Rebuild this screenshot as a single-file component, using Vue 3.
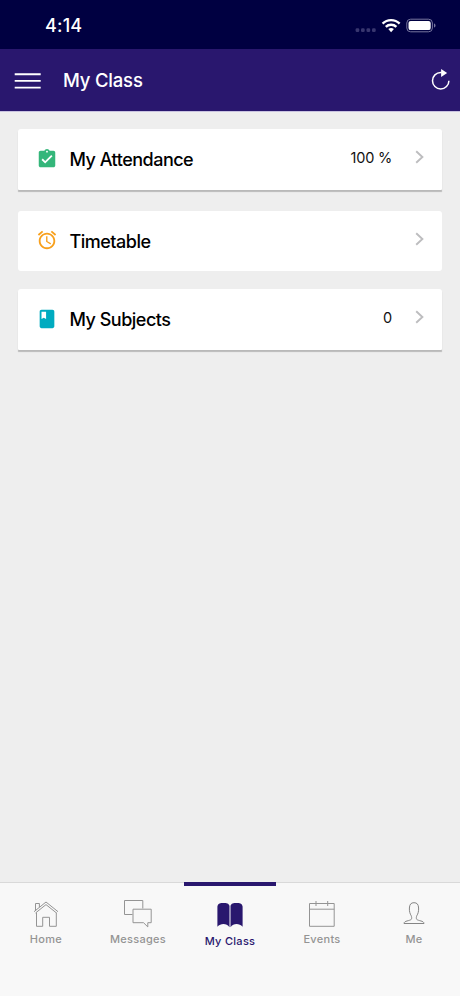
<script setup>
import { ref } from 'vue'

const cards = [
  { id: 'attendance', label: 'My Attendance', value: '100 %', raised: true },
  { id: 'timetable', label: 'Timetable', value: '', raised: false },
  { id: 'subjects', label: 'My Subjects', value: '0', raised: true },
]

const tabs = [
  { id: 'home', label: 'Home' },
  { id: 'messages', label: 'Messages' },
  { id: 'class', label: 'My Class' },
  { id: 'events', label: 'Events' },
  { id: 'me', label: 'Me' },
]

const activeTab = ref('class')
</script>

<template>
  <div class="app">
    <div class="status-bar">
      <span class="time">4:14</span>
      <svg class="status-icons" width="82" height="18" viewBox="0 0 82 18">
        <g fill="#38366f">
          <rect x="0.600" y="11.300" width="3.700" height="3.700" rx="1.300" />
          <rect x="6" y="11.300" width="3.700" height="3.700" rx="1.300" />
          <rect x="11.500" y="11.300" width="3.700" height="3.700" rx="1.300" />
          <rect x="17" y="11.300" width="3.700" height="3.700" rx="1.300" />
        </g>
        <g fill="none" stroke="#fff" stroke-width="2.400">
          <path d="M27.600 6.700a12 12 0 0 1 17 0" />
          <path d="M30.800 9.900a7.600 7.600 0 0 1 10.600 0" />
        </g>
        <path d="M33.300 12.100a4.400 4.400 0 0 1 5.600 0L36.100 15.200z" fill="#fff" />
        <rect x="51.800" y="2.200" width="25.600" height="12.600" rx="3.800" fill="none" stroke="#77769f" />
        <rect x="53.500" y="3.900" width="22.200" height="9.200" rx="2.200" fill="#fff" />
        <path d="M79 6.400v4.200c1-.4 1.500-1.100 1.500-2.100s-.5-1.700-1.500-2.100z" fill="#77769f" />
      </svg>
    </div>

    <header class="header">
      <button class="menu-btn" type="button" aria-label="Menu">
        <svg width="27" height="16" viewBox="0 0 27 16">
          <path d="M.7 1.200h26M.7 7.900h26M.7 14.600h26" stroke="#fff" stroke-width="1.900" />
        </svg>
      </button>
      <h1 class="title">My Class</h1>
      <button class="refresh-btn" type="button" aria-label="Refresh">
        <svg width="20" height="22" viewBox="0 0 20 22">
          <path d="M17.900 11.700a8.200 8.200 0 1 1-8.200-8.200h1" fill="none" stroke="#fff" stroke-width="1.500" />
          <path d="M10.100 0v8l6-4z" fill="#fff" />
        </svg>
      </button>
    </header>

    <main class="content">
      <div
        v-for="card in cards"
        :key="card.id"
        class="card"
        :class="{ raised: card.raised }"
      >
        <svg class="card-icon" width="22" height="22" viewBox="0 0 24 24">
          <path
            v-if="card.id === 'attendance'"
            fill="#34b67a"
            d="M19 3h-4.180C14.400 1.840 13.300 1 12 1s-2.400.840-2.820 2H5c-1.100 0-2 .9-2 2v14c0 1.100.9 2 2 2h14c1.100 0 2-.9 2-2V5c0-1.100-.9-2-2-2zm-7 0c.550 0 1 .450 1 1s-.450 1-1 1-1-.450-1-1 .450-1 1-1zm-2 14l-4-4 1.410-1.410L10 14.170l6.590-6.590L18 9l-8 8z"
          />
          <path
            v-else-if="card.id === 'timetable'"
            fill="#f8a01c"
            d="M22 5.720l-4.600-3.860-1.290 1.530 4.600 3.860L22 5.720zM7.880 3.390L6.600 1.860 2 5.710l1.290 1.530 4.590-3.850zM12.500 8H11v6l4.750 2.850.750-1.230-4-2.370V8zM12 4c-4.970 0-9 4.030-9 9s4.020 9 9 9 9-4.030 9-9-4.030-9-9-9zm0 16c-3.870 0-7-3.130-7-7s3.130-7 7-7 7 3.130 7 7-3.130 7-7 7z"
          />
          <path
            v-else
            fill="#00abc0"
            d="M18 2H6c-1.100 0-2 .9-2 2v16c0 1.100.9 2 2 2h12c1.100 0 2-.9 2-2V4c0-1.100-.9-2-2-2zM6 4h5v8l-2.500-1.500L6 12V4z"
          />
        </svg>
        <span class="card-label">{{ card.label }}</span>
        <span class="card-value">{{ card.value }}</span>
        <svg class="chevron" width="9" height="14" viewBox="0 0 9 14">
          <path d="M1.200 1.200L7.400 7l-6.200 5.800" fill="none" stroke="#bdbdbf" stroke-width="1.900" />
        </svg>
      </div>
    </main>

    <nav class="tab-bar">
      <button
        v-for="tab in tabs"
        :key="tab.id"
        class="tab"
        :class="{ active: tab.id === activeTab }"
        type="button"
        @click="activeTab = tab.id"
      >
        <svg class="tab-icon" width="30" height="30" viewBox="0 0 30 30">
          <g v-if="tab.id === 'home'" fill="none" stroke="#949494">
            <path d="M3 12.700L15 3l12 9.700M4.500 14L15 5.600 25.500 14M4.500 11.200V4.500h3.900v3.600" />
            <path d="M5.500 13.500v13.800h6.200v-9h6.800v9h6.800V13.500" />
          </g>
          <g v-else-if="tab.id === 'messages'" fill="none" stroke="#949494">
            <path d="M9.500 15.500h-8v-14h18.300v8" />
            <path d="M10 10.200h18.200v13.500h-3.400v4.200l-4.300-4.200H10z" />
          </g>
          <path
            v-else-if="tab.id === 'class'"
            fill="#29176e"
            d="M14.500 7C13.800 4.300 11.500 4 8.500 4S3 4.200 2.400 7.500v20.300c3.300-3.900 9.200-3.900 12.100.4zM15.500 7c.7-2.700 3-3 6-3s5.500.2 6.100 3.500v20.300c-3.300-3.900-9.200-3.900-12.100.4z"
          />
          <g v-else-if="tab.id === 'events'" fill="none" stroke="#949494">
            <path d="M2.500 4.500h24.700v22.800H2.500zM2.500 10.200h24.700M9 2v5M20.700 2v5" />
          </g>
          <path
            v-else
            fill="none"
            stroke="#858585"
            d="M5 24.500c0-2.900 5.800-2.500 7.300-4.200.7-1 .3-2.600-.1-3.600-1.200-1.800-2-4.500-1.800-7.700.2-3.700 1.600-5.300 4.600-5.300s4.400 1.600 4.600 5.300c.2 3.200-.6 5.900-1.800 7.700-.4 1-.8 2.600-.1 3.600 1.500 1.700 7.300 1.300 7.300 4.200z"
          />
        </svg>
        <span class="tab-label">{{ tab.label }}</span>
      </button>
    </nav>
  </div>
</template>

<style>
body {
  background: #eee;
}
</style>

<style scoped>
.app {
  display: flex;
  flex-direction: column;
  height: 100vh;
  background: #eee;
  font-family: Inter, 'Liberation Sans', sans-serif;
}

button {
  padding: 0;
  border: 0;
  background: none;
  font-family: inherit;
}

.status-bar {
  display: flex;
  align-items: center;
  justify-content: space-between;
  box-sizing: border-box;
  height: 49px;
  padding: 2px 23px 0 45px;
  background: #000041;
}

.time {
  color: #fff;
  font-size: 18px;
  font-weight: 500;
  letter-spacing: 0.2px;
}

.header {
  display: flex;
  align-items: center;
  box-sizing: border-box;
  height: 63px;
  padding: 0 9px 0 14px;
  border-bottom: 1px solid #c9c3e0;
  background: #29176e;
}

.menu-btn {
  display: flex;
  margin-top: 1px;
}

.title {
  flex: 1;
  margin: 0 0 0 22px;
  color: #fff;
  font-size: 18.5px;
  font-weight: 500;
  letter-spacing: -0.2px;
}

.refresh-btn {
  display: flex;
}

.content {
  flex: 1;
  padding: 17px 18px;
}

.card {
  display: flex;
  align-items: center;
  box-sizing: border-box;
  height: 60px;
  margin-bottom: 18px;
  padding: 0 18px;
  background: #fff;
  border-radius: 3px;
}

.card.raised {
  height: 61px;
  margin-bottom: 21px;
  border-radius: 3px 3px 1px 1px;
  box-shadow: 0 2px 1px -0.5px rgba(0, 0, 0, 0.22);
}

.card-icon {
  margin-bottom: 2px;
}

.card-label {
  flex: 1;
  margin-left: 11.500px;
  color: #000;
  font-size: 18px;
  font-weight: 500;
  letter-spacing: -0.5px;
}

.card-value {
  margin: 0 23px 4px 0;
  color: #111;
  font-size: 14.5px;
  letter-spacing: -0.2px;
}

.chevron {
  margin-bottom: 5px;
}

.tab-bar {
  display: flex;
  box-sizing: border-box;
  height: 114px;
  border-top: 1px solid #d9d9d9;
  background: #f8f8f8;
}

.tab {
  display: flex;
  flex: 1;
  flex-direction: column;
  align-items: center;
  padding-top: 16px;
  color: #949494;
}

.tab-label {
  margin-top: 3px;
  font-size: 11px;
  font-weight: 500;
  line-height: 14px;
  letter-spacing: 0.3px;
}

.tab.active {
  margin-top: -1px;
  padding-top: 13px;
  border-top: 4px solid #29176e;
  color: #29176e;
}

.tab.active .tab-label {
  margin-top: 5px;
}
</style>
